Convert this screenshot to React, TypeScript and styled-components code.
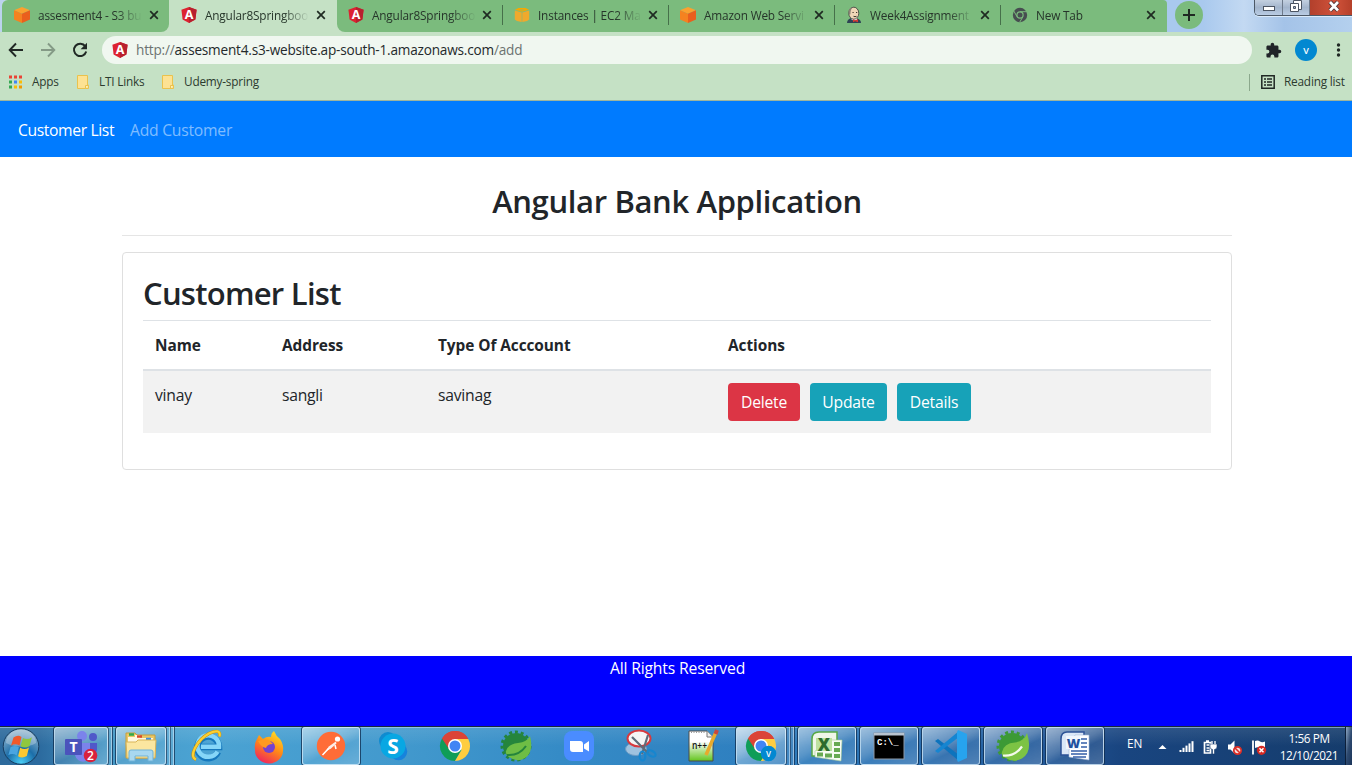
import React from "react";
import styled, { createGlobalStyle } from "styled-components";

const GlobalStyle = createGlobalStyle`
  * { box-sizing: border-box; }
  html, body { margin: 0; padding: 0; }
  body { width: 1352px; height: 765px; overflow: hidden; background: #fff; color: #212529;
    font-family: "Open Sans", "Noto Sans", sans-serif; }
  svg { display: block; flex: none; overflow: visible; }
  h1, h2, p { margin: 0; }
`;

const Screen = styled.div`
  display: flex;
  flex-direction: column;
  width: 1352px;
  height: 765px;
`;

/* ---------- browser window ---------- */

const TabStrip = styled.div`
  display: flex;
  height: 32px;
  padding-left: 2px;
  background: linear-gradient(90deg, #bcd3ee 0, #a9c9ee 85%, #a9c9ee 89%, #c3d9f2 92%, #a4c3e8 95%, #b4d0ee 100%);
`;

const TabShell = styled.div<{ $w: number; $last?: boolean }>`
  display: flex;
  width: ${(p) => p.$w}px;
  flex: none;
  background: ${(p) => (p.$last ? "transparent" : "#c5e1c5")};
  &:first-child { border-top-left-radius: 6px; }
`;

const TabFace = styled.div<{ $active?: boolean; $radius: string; $rule?: boolean; $pad: number }>`
  position: relative;
  display: flex;
  flex: 1;
  align-items: center;
  min-width: 0;
  padding: 0 0 2px ${(p) => p.$pad}px;
  background: ${(p) => (p.$active ? "#c5e1c5" : "#7bbb7d")};
  border-radius: ${(p) => p.$radius};
  &::after {
    content: "";
    display: ${(p) => (p.$rule ? "block" : "none")};
    position: absolute;
    right: 0;
    top: 5px;
    width: 1px;
    height: 20px;
    background: #46704a;
  }
`;

const TabTitle = styled.span`
  width: 104px;
  margin-left: 8px;
  white-space: nowrap;
  font-size: 11.8px;
  line-height: 18px;
  letter-spacing: -0.17px;
  color: #26352a;
  -webkit-mask-image: linear-gradient(90deg, #000 78px, transparent 104px);
  mask-image: linear-gradient(90deg, #000 78px, transparent 104px);
`;

const TabClose = styled.span<{ $gap: number }>`
  display: flex;
  margin-left: ${(p) => p.$gap}px;
`;

const StripEnd = styled.div`
  display: flex;
  flex: 1;
  align-items: flex-start;
  justify-content: space-between;
  padding-left: 8px;
`;

const NewTab = styled.div`
  display: flex;
  align-items: center;
  justify-content: center;
  width: 28px;
  height: 28px;
  margin-top: 1px;
  border-radius: 50%;
  background: #7bbb7d;
`;

const WindowButtons = styled.div`
  display: flex;
  height: 16px;
  border: 1px solid #4c5866;
  border-top: 0;
  border-right: 0;
  border-bottom-left-radius: 5px;
  overflow: hidden;
  box-shadow: 0 1px 0 #dcebfa;
`;

const WindowButton = styled.div<{ $w: number; $danger?: boolean }>`
  display: flex;
  align-items: center;
  justify-content: center;
  width: ${(p) => p.$w}px;
  padding-bottom: 3px;
  padding-left: ${(p) => (p.$danger ? 5 : 0)}px;
  border-left: 1px solid #6d7a8b;
  background: ${(p) =>
    p.$danger
      ? "linear-gradient(90deg, #b2402c, #d0523a 60%, #b5402a)"
      : "linear-gradient(#c3d0e0, #a3b5cc 50%, #b9cce4)"};
  &:first-child { border-left: 0; }
`;

const Toolbar = styled.div`
  display: flex;
  align-items: center;
  height: 36px;
  padding-left: 8px;
  background: #c5e1c5;
`;

const NavIcons = styled.div`
  display: flex;
  gap: 16px;
  width: 94px;
`;

const AddressBar = styled.div`
  display: flex;
  align-items: center;
  width: 1150px;
  height: 28px;
  padding-left: 10px;
  border-radius: 14px;
  background: #f0f7f0;
`;

const Url = styled.span`
  margin-left: 8px;
  font-size: 13.6px;
  line-height: 18px;
  letter-spacing: -0.2px;
  white-space: nowrap;
  color: #24292b;
  span { color: #6c7370; }
`;

const ToolbarRight = styled.div`
  display: flex;
  align-items: center;
  margin-left: 13px;
`;

const Avatar = styled.div`
  display: flex;
  align-items: center;
  justify-content: center;
  width: 22px;
  height: 22px;
  margin: 0 11px 0 13px;
  border-radius: 50%;
  background: #0288d1;
  color: #fff;
  font-size: 9px;
  font-weight: 600;
`;

const Bookmarks = styled.div`
  display: flex;
  align-items: center;
  height: 33px;
  padding: 0 6px 4px 8px;
  border-bottom: 1px solid #9db49d;
  background: #c5e1c5;
`;

const Bookmark = styled.div<{ $w: number }>`
  display: flex;
  align-items: center;
  gap: 9px;
  width: ${(p) => p.$w}px;
  font-size: 11.8px;
  line-height: 18px;
  letter-spacing: -0.2px;
  white-space: nowrap;
  color: #2c3a2e;
`;

const BookmarkLabel = styled.span`
  padding-bottom: 2px;
`;

const ReadingList = styled(Bookmark)`
  margin-left: auto;
  padding-left: 11px;
  height: 17px;
  border-left: 1px solid #8ba88c;
`;

/* ---------- web page ---------- */

const SiteNav = styled.nav`
  display: flex;
  align-items: center;
  height: 56px;
  padding-left: 18px;
  padding-top: 1px;
  gap: 16px;
  background: #007bff;
`;

const NavItem = styled.span<{ $active?: boolean; $w: number; $ls: number }>`
  width: ${(p) => p.$w}px;
  font-size: 15.7px;
  line-height: 24px;
  letter-spacing: ${(p) => p.$ls}px;
  white-space: nowrap;
  color: ${(p) => (p.$active ? "#fff" : "rgba(255,255,255,.5)")};
`;

const Page = styled.main`
  width: 1110px;
  height: 499px;
  margin-left: 122px;
  padding-top: 25px;
`;

const Title = styled.h1`
  height: 54px;
  border-bottom: 1px solid #e5e5e5;
  text-align: center;
  font-size: 31px;
  font-weight: 600;
  line-height: 38px;
  letter-spacing: -0.36px;
  white-space: nowrap;
`;

const Card = styled.section`
  height: 218px;
  margin-top: 16px;
  padding: 20px;
  border: 1px solid #dfdfdf;
  border-radius: 4px;
`;

const CardTitle = styled.h2`
  height: 47px;
  font-size: 31px;
  font-weight: 600;
  line-height: 40px;
  letter-spacing: -0.74px;
`;

const Table = styled.div`
  border-top: 1px solid #dee2e6;
`;

const Row = styled.div<{ $head?: boolean }>`
  display: grid;
  grid-template-columns: 127px 156px 290px 1fr;
  height: ${(p) => (p.$head ? 50 : 62)}px;
  padding-top: ${(p) => (p.$head ? 13 : 12)}px;
  font-size: ${(p) => (p.$head ? 15.4 : 15.7)}px;
  font-weight: ${(p) => (p.$head ? 700 : 400)};
  line-height: 24px;
  letter-spacing: ${(p) => (p.$head ? -0.06 : -0.24)}px;
  background: ${(p) => (p.$head ? "#fff" : "#f2f2f2")};
  border-bottom: ${(p) => (p.$head ? "2px solid #dee2e6" : "0")};
`;

const Cell = styled.div`
  padding-left: 12px;
`;

const Actions = styled.div`
  display: flex;
  gap: 10px;
  padding-left: 12px;
`;

const Button = styled.button<{ $bg: string; $w: number }>`
  width: ${(p) => p.$w}px;
  height: 38px;
  padding: 1px 0 0;
  border: 0;
  border-radius: 4px;
  background: ${(p) => p.$bg};
  color: #fff;
  font: 400 15.7px/37px "Open Sans", sans-serif;
  letter-spacing: -0.22px;
`;

const Footer = styled.footer`
  height: 70px;
  padding-left: 3px;
  background: #0000ff;
  color: #fff;
  text-align: center;
  font-size: 15.7px;
  line-height: 25px;
  letter-spacing: -0.16px;
`;

/* ---------- taskbar ---------- */

const Taskbar = styled.div`
  display: flex;
  height: 39px;
  border-top: 1px solid #16283c;
  box-shadow: inset 0 1px 0 rgba(190, 220, 245, 0.55);
  background:
    linear-gradient(rgba(255,255,255,.1), rgba(255,255,255,0) 50%),
    linear-gradient(90deg, #2d6a9c 0, #2c6b9f 40px, #4598c6 110px, #4ba3d3 200px, #4299cd 400px, #358bc6 560px, #2f80c0 740px, #2a70b2 900px, #22599a 1040px, #194580 1120px, #153c6c 1352px);
`;

const StartArea = styled.div`
  width: 54px;
  padding: 1px 0 0 2px;
`;

const Slot = styled.div`
  display: flex;
  width: 58px;
  margin-right: 4px;
  flex: none;
`;

const SlotFace = styled.div<{ $w: number; $framed?: boolean; $lit?: boolean }>`
  display: flex;
  align-items: center;
  justify-content: center;
  width: ${(p) => p.$w}px;
  height: 38px;
  border-radius: 3px;
  ${(p) =>
    p.$framed &&
    `border: 1px solid rgba(215,236,250,.75);
     box-shadow: 0 0 0 1px rgba(14,42,75,.75);
     background: linear-gradient(155deg, rgba(255,255,255,${p.$lit ? 0.72 : 0.5}) 0, rgba(255,255,255,${p.$lit ? 0.45 : 0.22}) 45%, rgba(255,255,255,${p.$lit ? 0.3 : 0.08}) 60%, rgba(255,255,255,.2) 100%);`}
`;

const SlotLayer = styled.div`
  width: 4px;
  height: 38px;
  border-right: 1px solid rgba(210,232,248,.6);
  box-shadow: 1px 0 0 rgba(14,42,75,.7);
  background: rgba(255,255,255,.1);
`;

const Tray = styled.div`
  display: flex;
  align-items: flex-start;
  flex: 1;
  padding-left: 19px;
  color: #fff;
`;

const Language = styled.span`
  width: 31px;
  margin-top: 7px;
  font-size: 11.8px;
  line-height: 18px;
`;

const TrayIcons = styled.div`
  display: flex;
  align-items: center;
  gap: 9px;
  height: 40px;
  margin-right: 9px;
`;

const Clock = styled.div`
  width: 66px;
  padding-top: 3px;
  text-align: center;
  font-size: 11.8px;
  line-height: 17px;
  letter-spacing: -0.42px;
  white-space: nowrap;
`;

const ShowDesktop = styled.div`
  width: 7px;
  margin-left: auto;
  border-left: 1px solid #0c1f3a;
  background: linear-gradient(100deg, #8fa8c4, #2e4a70 50%, #1a3358);
`;

const svgFont = { fontFamily: "Open Sans, sans-serif" };

/* ---------- icons ---------- */

const Cube = () => (
  <svg width="16" height="16" viewBox="0 0 16 16">
    <path d="M8 0l8 3.2-8 3.6L0 3.2z" fill="#fba12f" />
    <path d="M0 3.2l8 3.6V16l-8-3.4z" fill="#f58220" />
    <path d="M16 3.2L8 6.8V16l8-3.4z" fill="#ea5f1d" />
  </svg>
);

const Angular = () => (
  <svg width="16" height="16" viewBox="0 0 16 16">
    <path d="M8 0l7.6 2.7-1.2 9.8L8 16l-6.4-3.5L.4 2.7z" fill="#dd2231" />
    <path d="M8 0l7.6 2.7-1.2 9.8L8 16z" fill="#b8202f" />
    <text x="8" y="12" textAnchor="middle" fontSize="12.500" fontWeight="700" fill="#fff" style={svgFont}>A</text>
  </svg>
);

const Ec2Box = () => (
  <svg width="16" height="16" viewBox="0 0 16 16">
    <path d="M1 2.700L4.500 1h7L15 2.700 8 4.800z" fill="#f6a800" />
    <path d="M.8 3.600l6.900 2V15L3 14 .8 12.600z" fill="#f0a92c" />
    <path d="M15.200 3.600l-6.900 2V15l4.700-1 2.200-1.400z" fill="#f0a92c" />
    <path d="M5 2.800L8 2l3 .8-3 1z" fill="#7bbb7d" opacity=".5" />
  </svg>
);

const Jenkins = () => (
  <svg width="16" height="16" viewBox="0 0 16 16">
    <path d="M1 16c0-3 2-4 4-5h5c3 1 5 2 5 5z" fill="#2e4354" />
    <path d="M5 10h6v3l-3 1-3-2z" fill="#fff" />
    <ellipse cx="7.8" cy="6.2" rx="5" ry="6" fill="#f0d6b7" stroke="#333" strokeWidth=".8" />
    <path d="M3 7C1.6 3 4 .4 7 .3 5 1.500 4.500 4 4.400 7.500z" fill="#8a8075" />
    <path d="M6.500 5.500h1.200M10 5.500h1.200M7.500 9.300q1.500.8 3 0" stroke="#40362c" fill="none" />
    <path d="M7 12l2 1.300L12 12v3.200l-3-1-2 1z" fill="#d33833" />
  </svg>
);

const GrayChrome = () => (
  <svg width="16" height="16" viewBox="0 0 16 16">
    <circle cx="8" cy="8" r="7.200" fill="#474d50" />
    <circle cx="8" cy="8" r="3.700" fill="#7bbb7d" />
    <circle cx="8" cy="8" r="2.500" fill="#474d50" />
    <path d="M8 4.700h7M5.100 9.800L1.800 4M10.900 9.800L7.800 15" stroke="#7bbb7d" strokeWidth="1" />
  </svg>
);

const CloseX = () => (
  <svg width="10" height="10" viewBox="0 0 10 10">
    <path d="M1.200 1.200l7.600 7.600M8.800 1.200L1.200 8.800" stroke="#1f2b22" strokeWidth="1.700" />
  </svg>
);

const Plus = () => (
  <svg width="14" height="14" viewBox="0 0 14 14">
    <path d="M7 1v12M1 7h12" stroke="#1f2a22" strokeWidth="2" />
  </svg>
);

const Back = ({ flip, color }: { flip?: boolean; color: string }) => (
  <svg width="16" height="16" viewBox="0 0 16 16">
    <path
      d="M15 8H2M8 1.500L1.700 8 8 14.500"
      transform={flip ? "translate(16 0) scale(-1 1)" : undefined}
      stroke={color}
      strokeWidth="1.900"
      fill="none"
    />
  </svg>
);

const Reload = () => (
  <svg width="16" height="16" viewBox="0 0 16 16">
    <path d="M13.300 4.300A6.200 6.200 0 1 0 14.200 9.500" stroke="#202824" strokeWidth="2" fill="none" />
    <path d="M15 .8v6.400H8.600z" fill="#202824" />
  </svg>
);

const Puzzle = () => (
  <svg width="17" height="17" viewBox="0 0 24 24">
    <path
      fill="#202428"
      d="M20.500 11H19V7c0-1.100-.9-2-2-2h-4V3.500a2.500 2.500 0 0 0-5 0V5H4c-1.100 0-2 .9-2 2v3.800h1.500a2.700 2.700 0 0 1 0 5.400H2V20c0 1.100.9 2 2 2h3.800v-1.500a2.700 2.700 0 0 1 5.400 0V22H17c1.100 0 2-.9 2-2v-4h1.500a2.500 2.500 0 0 0 0-5z"
    />
  </svg>
);

const Dots = () => (
  <svg width="20" height="14" viewBox="0 0 20 14">
    {[2, 7, 12].map((y) => <circle key={y} cx="10.500" cy={y} r="1.700" fill="#202824" />)}
  </svg>
);

const appColors = ["#ea4335", "#ea4335", "#ea4335", "#34a853", "#4285f4", "#fbbc05", "#34a853", "#fbbc05", "#f29900"];
const AppsGrid = () => (
  <svg width="15" height="14" viewBox="0 0 15 14">
    {appColors.map((c, i) => (
      <rect key={i} x={1 + (i % 3) * 5} y={0.500 + Math.floor(i / 3) * 5} width="3" height="3" fill={c} />
    ))}
  </svg>
);

const Folder = () => (
  <svg width="14" height="16" viewBox="0 0 14 16">
    <path d="M1.500 1.500h10V11h1v3.500h-11z" fill="#fde293" stroke="#eac24d" />
    <path d="M9.500 14.500v-3h3" fill="#fff0b8" stroke="#eac24d" />
  </svg>
);

const ListIcon = () => (
  <svg width="14" height="14" viewBox="0 0 14 14">
    <path d="M.8.8h12.400v12.400H.8z" fill="none" stroke="#202824" strokeWidth="1.500" />
    <path d="M3 4h2M6 4h5M3 7h2M6 7h5M3 10h2M6 10h5" stroke="#202824" strokeWidth="1.600" />
  </svg>
);

const StartOrb = () => (
  <svg width="38" height="37" viewBox="0 0 38 37">
    <defs>
      <radialGradient id="orb" cx=".5" cy=".95" r=".9">
        <stop offset="0" stopColor="#49cdf5" />
        <stop offset=".45" stopColor="#1c6ea9" />
        <stop offset="1" stopColor="#8fb3cc" />
      </radialGradient>
    </defs>
    <circle cx="19" cy="18.500" r="17.800" fill="url(#orb)" stroke="#173d60" />
    <path d="M4 15a15 13.500 0 0 1 30 0c-8 5-20 5-30 0z" fill="#fff" opacity=".28" />
    <path d="M11.500 9.500q4.500-3.300 8-.5L17.500 17.500q-4.500-2.500-8.500.2z" fill="#f0592b" />
    <path d="M20.900 10q4.500 2.500 9-.8L27.500 18q-4.500 3-9 .2z" fill="#8fc73e" />
    <path d="M8.500 19.300q4.500-2.800 8.400 0l-2.200 8.200q-4-2.700-8.400-.3z" fill="#4aa5e0" />
    <path d="M18.200 19.700q4.500 2.700 8.800-.3L24.800 28q-4.500 2.700-8.700.2z" fill="#fdc82f" />
  </svg>
);

const Teams = () => (
  <svg width="34" height="34" viewBox="0 0 34 34">
    <circle cx="18" cy="7" r="5" fill="#7b83eb" />
    <circle cx="29" cy="8" r="4" fill="#5059c9" />
    <path d="M11 14h16v9a8 8 0 0 1-16 3z" fill="#7b83eb" />
    <path d="M26 14h7v7q-1 5-7 4z" fill="#5059c9" />
    <rect x="1" y="10" width="17" height="16" rx="1" fill="#4b53bc" />
    <text x="9.500" y="23" textAnchor="middle" fontSize="14" fontWeight="700" fill="#fff" style={svgFont}>T</text>
    <circle cx="26.500" cy="26.500" r="6.800" fill="#d9213c" />
    <text x="26.500" y="31" textAnchor="middle" fontSize="12" fontWeight="600" fill="#fff" style={svgFont}>2</text>
  </svg>
);

const Explorer = () => (
  <svg width="34" height="32" viewBox="0 0 34 32">
    <path d="M2 3h9l2 2h18v23H2z" fill="#e9c766" stroke="#c89e3b" />
    <path d="M4 7h7v-2h5v3h13v5H4z" fill="#fff7df" />
    <path d="M5 4.500h5" stroke="#2fa84a" strokeWidth="2.500" />
    <path d="M13 6.500h5" stroke="#d9482b" strokeWidth="2.500" />
    <path d="M22 9h5" stroke="#3f8fe0" strokeWidth="2.500" />
    <path d="M2 12h10l2-2h18l-1 18H3z" fill="#fbe6a0" stroke="#d9b458" />
    <path d="M5 31V22q0-2 2-2h20q2 0 2 2v9h-5v-5H11v5z" fill="#a8d8f0" stroke="#6fb2d8" />
  </svg>
);

const InternetExplorer = () => (
  <svg width="34" height="34" viewBox="0 0 34 34">
    <path d="M28 23A10.800 10.800 0 1 1 29 18H11" fill="none" stroke="#1678bd" strokeWidth="6.500" />
    <path d="M27.500 22.600A10.800 10.800 0 1 1 29 17.800H11" fill="none" stroke="#86d6f8" strokeWidth="4.500" />
    <path d="M6 30.500C-2 28 7 11 19 4.500c7-3.500 12-3 10.500 3" fill="none" stroke="#c8900c" strokeWidth="3.200" />
    <path d="M6 30.500C-2 28 7 11 19 4.500c7-3.500 12-3 10.500 3" fill="none" stroke="#fbd032" strokeWidth="2.200" />
  </svg>
);

const Firefox = () => (
  <svg width="32" height="32" viewBox="0 0 32 32">
    <defs>
      <linearGradient id="fox" x1=".8" y1="0" x2=".3" y2="1">
        <stop offset="0" stopColor="#ffe226" />
        <stop offset=".5" stopColor="#ff8a16" />
        <stop offset="1" stopColor="#f0245e" />
      </linearGradient>
    </defs>
    <path d="M4 9l2-4 4 4q4-3 8-2 0-4 3-6 2 5 6 8 4 6 3 12a14 13 0 0 1-28-1Q1 14 4 9z" fill="url(#fox)" />
    <circle cx="16" cy="17" r="6" fill="#7542cf" />
    <path d="M5 11q7-3 12 0l3 3q-6 0-7 4-5-1-8-7z" fill="#ff9a1f" />
  </svg>
);

const Postman = () => (
  <svg width="30" height="30" viewBox="0 0 30 30">
    <circle cx="15" cy="15" r="14.200" fill="#ff6c37" />
    <circle cx="21.500" cy="8" r="2.600" fill="#fff" />
    <path d="M19.800 10.500l-7 5-3.300 5 5.500-3 5.500-5z" fill="#fdeee8" />
    <path d="M12.500 17.500l-6 6.500M19 14l1 4" stroke="#fff" strokeWidth="1.500" />
  </svg>
);

const Skype = () => (
  <svg width="30" height="30" viewBox="0 0 30 30">
    <circle cx="10" cy="10" r="9" fill="#0f8bd0" />
    <circle cx="20.500" cy="20.500" r="8.700" fill="#1683dc" />
    <circle cx="15" cy="15" r="12.500" fill="#08a7e3" />
    <text x="15" y="22.500" textAnchor="middle" fontSize="21" fontWeight="700" fill="#fff" style={svgFont}>S</text>
  </svg>
);

const Chrome = ({ badge }: { badge?: boolean }) => (
  <svg width="32" height="32" viewBox="0 0 32 32">
    <path d="M16 16L3 8.500A15 15 0 0 1 29 8.500z" fill="#db4437" />
    <path d="M16 16L3 8.500A15 15 0 0 0 16 31l6.500-11z" fill="#0f9d58" />
    <path d="M16 9h13.300A15 15 0 0 1 16 31l6.500-11z" fill="#ffcd40" />
    <path d="M3 8.500A15 15 0 0 1 29.300 9H16l-6 10z" fill="#db4437" />
    <circle cx="16" cy="16" r="7" fill="#fff" />
    <circle cx="16" cy="16" r="5.500" fill="#4285f4" />
    {badge && <circle cx="23.500" cy="23.500" r="7.800" fill="#0288d1" />}
    {badge && <text x="23.500" y="26.800" textAnchor="middle" fontSize="8" fontWeight="600" fill="#fff" style={svgFont}>V</text>}
  </svg>
);

const Spring = ({ bright }: { bright?: boolean }) => (
  <svg width="34" height="34" viewBox="0 0 34 34">
    <circle cx="16" cy="17" r="13" fill={bright ? "#3c9a35" : "#25853c"} />
    <circle cx="16" cy="17" r="14" fill="none" stroke={bright ? "#3c9a35" : "#25853c"} strokeWidth="3" strokeDasharray="3 2.860" />
    {bright ? (
      <>
        <path d="M31 4q6 19-5 25.500-9 5-18-1.500-3-2-2-5 2-9 13-9.500 9-1 12-9.500z" fill="#7cc344" />
        <path d="M7 26.500q12 1 19-9" fill="none" stroke="#f4faec" strokeWidth="2.200" />
      </>
    ) : (
      <>
        <path d="M30 7q4 16-5 22-8 5-16-1-4-3-3-6 2-7 12-8 9-1 12-7z" fill="#6ebd45" />
        <path d="M7 26q12 1 19-9" fill="none" stroke="#25853c" strokeWidth="2" />
      </>
    )}
  </svg>
);

const Zoom = () => (
  <svg width="32" height="32" viewBox="0 0 32 32">
    <rect x="1" y="1" width="30" height="30" rx="8" fill="#4a8cff" />
    <path d="M7 11h10q3 0 3 3v8H10q-3 0-3-3zM21 14.500l5-3.500v10.500l-5-3z" fill="#fff" />
  </svg>
);

const Snipping = () => (
  <svg width="34" height="34" viewBox="0 0 34 34">
    <ellipse cx="12" cy="20" rx="10.500" ry="6.500" fill="#9fc2df" stroke="#6e9cc4" />
    <ellipse cx="15" cy="9.500" rx="11.500" ry="8" fill="#f5f5f5" stroke="#d7393e" strokeWidth="2" />
    <path d="M8 8l16 16M24 6l-6 19" stroke="#5f6b78" strokeWidth="2.200" />
    <ellipse cx="18.500" cy="27" rx="2.800" ry="4.500" fill="none" stroke="#1686cf" strokeWidth="2.200" />
    <ellipse cx="27.500" cy="24.500" rx="4.500" ry="2.600" transform="rotate(30 27.500 24.500)" fill="none" stroke="#1686cf" strokeWidth="2.200" />
  </svg>
);

const NotepadPP = () => (
  <svg width="32" height="34" viewBox="0 0 32 34">
    <defs>
      <linearGradient id="npp" x1="0" y1="0" x2="0" y2="1">
        <stop offset=".35" stopColor="#fff" />
        <stop offset="1" stopColor="#63c51d" />
      </linearGradient>
    </defs>
    <path d="M2 2h18l6 6v24H2z" fill="url(#npp)" stroke="#4a4a4a" />
    <path d="M4 3h14" stroke="#9b9b9b" strokeWidth="2" strokeDasharray="1 1.500" />
    <path d="M20 2v6h6" fill="#eee" stroke="#777" />
    <text x="12.500" y="20" textAnchor="middle" fontSize="10" fontWeight="600" fill="#111" textLength="15" lengthAdjust="spacingAndGlyphs" style={svgFont}>n++</text>
    <path d="M29 3L19 26" stroke="#e8aa2c" strokeWidth="3.500" />
    <path d="M30 1l-1.500 4" stroke="#c9483d" strokeWidth="4" />
  </svg>
);

const Excel = () => (
  <svg width="34" height="32" viewBox="0 0 34 32">
    <path d="M9 2h18v24H2V9q0-7 7-7z" fill="#eff6e8" stroke="#56a845" strokeWidth="1.500" />
    <path d="M19 10h13l-1 21L5 27v-6z" fill="#f7fbf3" stroke="#a9cf98" strokeWidth=".6" />
    {[12, 18, 24].map((y) => <rect key={y} x="24" y={y} width="6" height="4" fill="#67a952" />)}
    <rect x="7" y="22.500" width="6" height="4" fill="#67a952" />
    <rect x="15" y="23.500" width="7" height="4" fill="#67a952" />
    <rect x="6" y="8" width="16" height="13" fill="#bde19f" />
    <text x="14" y="20.500" textAnchor="middle" fontSize="17" fontWeight="800" fill="#2c6b2c" style={svgFont}>X</text>
  </svg>
);

const Terminal = () => (
  <svg width="32" height="28" viewBox="0 0 32 28">
    <rect x="1" y="1" width="30" height="26" fill="#000" stroke="#8d98a6" />
    <rect x="1" y="1" width="30" height="2.500" fill="#b8c3d0" />
    <text x="4" y="13" fontSize="9" fontWeight="700" fill="#fff" style={{ fontFamily: "Liberation Mono, monospace" }}>C:\_</text>
  </svg>
);

const VsCode = () => (
  <svg width="34" height="34" viewBox="0 0 34 34">
    <path d="M1 12l3-2 21 16v6z" fill="#0d73bd" />
    <path d="M1 22l3 2L25 8V2z" fill="#1685d1" />
    <path d="M24 1l9 4v24l-9 4-1-2V3z" fill="#27a3ee" />
  </svg>
);

const Word = () => (
  <svg width="34" height="34" viewBox="0 0 34 34">
    <path d="M9 3h17v23H3V10q0-7 6-7z" fill="#dbe7f7" stroke="#2c5296" strokeWidth="1.500" />
    <path d="M17 6h14v25l-20-3V21z" fill="#fff" stroke="#9fb5d6" strokeWidth=".6" />
    <path d="M23 10h6M23 14h6M23 18h6M13 22h16M13 25h16M15 28h13" stroke="#355fa8" strokeWidth="1.600" />
    <rect x="8" y="7" width="14" height="13" fill="#f1f6fd" />
    <text x="15.500" y="18.500" textAnchor="middle" fontSize="13" fontWeight="800" fill="#21509d" style={svgFont}>W</text>
  </svg>
);

const TrayArrow = () => (
  <svg width="12" height="16" viewBox="0 0 12 16"><path d="M.5 10L4.500 6l4 4z" fill="#fff" /></svg>
);

const Signal = () => (
  <svg width="15" height="16" viewBox="0 0 15 16">
    {[0, 1, 2, 3, 4].map((i) => <rect key={i} x={i * 3 + 0.500} y={11 - i * 2.200} width="2" height={2 + i * 2.200} fill="#fff" />)}
  </svg>
);

const Power = () => (
  <svg width="15" height="16" viewBox="0 0 15 16">
    <path d="M3 2h3M1.500 3.500h6v10.500h-6z" fill="none" stroke="#fff" strokeWidth="1.700" />
    <path d="M3.500 6h3M3.500 9h3M3.500 11.500h3" stroke="#fff" strokeWidth="1.500" />
    <path d="M7 5h7v3q0 2-2.500 2.500V15h-2v-4.500Q7 10 7 8z" fill="#fff" stroke="#173a6b" strokeWidth=".6" />
    <path d="M9 2v3M12 2v3" stroke="#fff" strokeWidth="1.300" />
  </svg>
);

const Muted = () => (
  <svg width="15" height="16" viewBox="0 0 15 16">
    <path d="M1 5.500h2.500L7.500 1.500v13l-4-4H1z" fill="#fff" />
    <circle cx="10.500" cy="11.500" r="3.700" fill="#f8dcda" stroke="#dc2d26" strokeWidth="1.800" />
    <path d="M8 9l5 5" stroke="#dc2d26" strokeWidth="1.600" />
  </svg>
);

const Flag = () => (
  <svg width="16" height="16" viewBox="0 0 16 16">
    <path d="M2 1.500v14" stroke="#fff" strokeWidth="1.800" />
    <path d="M4 2q3-1 5 .5t5 0v7q-3 1-5-.5t-5 0z" fill="#fff" />
    <circle cx="10.500" cy="11.300" r="4.600" fill="#d62822" />
    <path d="M8.500 9.300l4 4M12.500 9.300l-4 4" stroke="#fff" strokeWidth="1.500" />
  </svg>
);

const MinimizeGlyph = () => (
  <svg width="14" height="12" viewBox="0 0 14 12"><rect x="1.500" y="6.500" width="11" height="4" fill="#fff" stroke="#4c5563" /></svg>
);

const RestoreGlyph = () => (
  <svg width="14" height="13" viewBox="0 0 14 13">
    <path d="M4.500.5h8v9h-8z" fill="#fff" stroke="#4c5563" />
    <path d="M1.500 3.500h8v8h-8z" fill="#fff" stroke="#4c5563" />
    <path d="M4.500 6.500h2v2h-2z" fill="#a3b5cc" stroke="#4c5563" />
  </svg>
);

const CloseGlyph = () => (
  <svg width="14" height="12" viewBox="0 0 14 12">
    <path d="M3 2l8 8.500M11 2l-8 8.500" stroke="#4a3438" strokeWidth="4.400" />
    <path d="M3 2l8 8.500M11 2l-8 8.500" stroke="#fff" strokeWidth="2.700" />
  </svg>
);

/* ---------- data ---------- */

type Tab = { title: string; icon: React.ReactNode; w: number; radius: string; pad: number; gap: number; active?: boolean; rule?: boolean };
const tabs: Tab[] = [
  { title: "assesment4 - S3 bu", icon: <Cube />, w: 167, pad: 12, gap: 7, radius: "6px 0 8px 0" },
  { title: "Angular8Springboo", icon: <Angular />, w: 168, pad: 12, gap: 7, radius: "0", active: true },
  { title: "Angular8Springboo", icon: <Angular />, w: 166, pad: 11, gap: 6, radius: "0 0 0 8px", rule: true },
  { title: "Instances | EC2 Ma", icon: <Ec2Box />, w: 166, pad: 11, gap: 6, radius: "0", rule: true },
  { title: "Amazon Web Servi", icon: <Cube />, w: 166, pad: 11, gap: 6, radius: "0", rule: true },
  { title: "Week4Assignment", icon: <Jenkins />, w: 166, pad: 11, gap: 6, radius: "0", rule: true },
  { title: "New Tab", icon: <GrayChrome />, w: 166, pad: 11, gap: 6, radius: "0 4px 0 0" },
];

type Task = { icon: React.ReactNode; framed?: boolean; lit?: boolean; layers?: number };
const tasks: Task[] = [
  { icon: <Teams />, framed: true, layers: 1 },
  { icon: <Explorer />, framed: true, layers: 2 },
  { icon: <InternetExplorer /> },
  { icon: <Firefox /> },
  { icon: <Postman />, framed: true },
  { icon: <Skype /> },
  { icon: <Chrome /> },
  { icon: <Spring /> },
  { icon: <Zoom /> },
  { icon: <Snipping /> },
  { icon: <NotepadPP /> },
  { icon: <Chrome badge />, framed: true, lit: true, layers: 2 },
  { icon: <Excel />, framed: true },
  { icon: <Terminal />, framed: true },
  { icon: <VsCode />, framed: true },
  { icon: <Spring bright />, framed: true },
  { icon: <Word />, framed: true },
];

export default function App() {
  return (
    <Screen>
      <GlobalStyle />
      <TabStrip>
        {tabs.map((t, i) => (
          <TabShell key={i} $w={t.w} $last={i === tabs.length - 1}>
            <TabFace $active={t.active} $radius={t.radius} $rule={t.rule} $pad={t.pad}>
              {t.icon}
              <TabTitle>{t.title}</TabTitle>
              <TabClose $gap={t.gap}><CloseX /></TabClose>
            </TabFace>
          </TabShell>
        ))}
        <StripEnd>
          <NewTab><Plus /></NewTab>
          <WindowButtons>
            <WindowButton $w={27}><MinimizeGlyph /></WindowButton>
            <WindowButton $w={27}><RestoreGlyph /></WindowButton>
            <WindowButton $w={43} $danger><CloseGlyph /></WindowButton>
          </WindowButtons>
        </StripEnd>
      </TabStrip>
      <Toolbar>
        <NavIcons>
          <Back color="#202824" />
          <Back flip color="#849a86" />
          <Reload />
        </NavIcons>
        <AddressBar>
          <Angular />
          <Url><span>http://</span>assesment4.s3-website.ap-south-1.amazonaws.com<span>/add</span></Url>
        </AddressBar>
        <ToolbarRight>
          <Puzzle />
          <Avatar>V</Avatar>
          <Dots />
        </ToolbarRight>
      </Toolbar>
      <Bookmarks>
        <Bookmark $w={68}><AppsGrid /><BookmarkLabel>Apps</BookmarkLabel></Bookmark>
        <Bookmark $w={85}><Folder /><BookmarkLabel>LTI Links</BookmarkLabel></Bookmark>
        <Bookmark $w={110}><Folder /><BookmarkLabel>Udemy-spring</BookmarkLabel></Bookmark>
        <ReadingList $w={97}><ListIcon /><BookmarkLabel>Reading list</BookmarkLabel></ReadingList>
      </Bookmarks>

      <SiteNav>
        <NavItem $active $w={96} $ls={-0.38}>Customer List</NavItem>
        <NavItem $w={102} $ls={-0.24}>Add Customer</NavItem>
      </SiteNav>
      <Page>
        <Title>Angular Bank Application</Title>
        <Card>
          <CardTitle>Customer List</CardTitle>
          <Table>
            <Row $head>
              <Cell>Name</Cell>
              <Cell>Address</Cell>
              <Cell>Type Of Acccount</Cell>
              <Cell>Actions</Cell>
            </Row>
            <Row>
              <Cell>vinay</Cell>
              <Cell>sangli</Cell>
              <Cell>savinag</Cell>
              <Actions>
                <Button $bg="#dc3545" $w={72}>Delete</Button>
                <Button $bg="#17a2b8" $w={77}>Update</Button>
                <Button $bg="#17a2b8" $w={74}>Details</Button>
              </Actions>
            </Row>
          </Table>
        </Card>
      </Page>
      <Footer>All Rights Reserved</Footer>

      <Taskbar>
        <StartArea><StartOrb /></StartArea>
        {tasks.map((t, i) => (
          <Slot key={i}>
            <SlotFace $w={58 - (t.layers ?? 0) * 4} $framed={t.framed} $lit={t.lit}>{t.icon}</SlotFace>
            {Array.from({ length: t.layers ?? 0 }, (_, n) => <SlotLayer key={n} />)}
          </Slot>
        ))}
        <Tray>
          <Language>EN</Language>
          <TrayIcons>
            <TrayArrow />
            <Signal />
            <Power />
            <Muted />
            <Flag />
          </TrayIcons>
          <Clock>1:56 PM<br />12/10/2021</Clock>
        </Tray>
        <ShowDesktop />
      </Taskbar>
    </Screen>
  );
}
